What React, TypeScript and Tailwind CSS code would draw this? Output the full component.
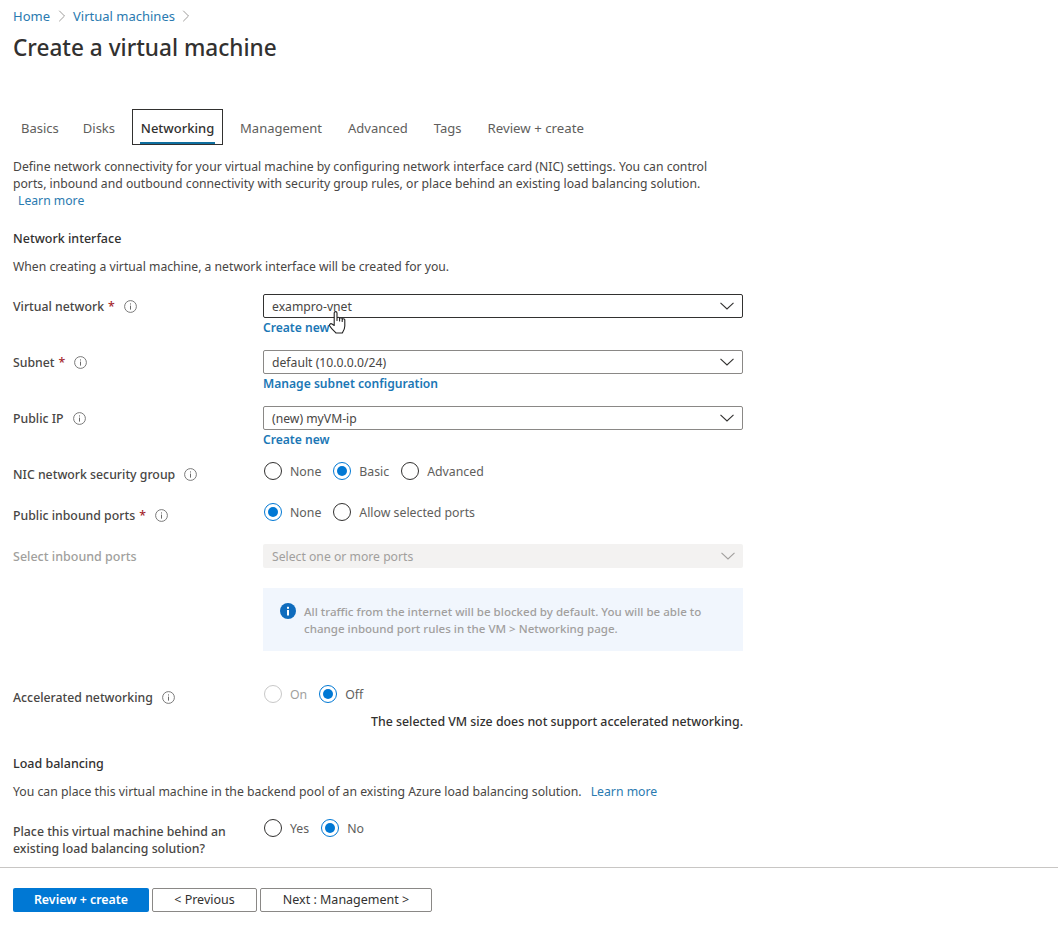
import React from 'react';
import { ChevronRight } from 'lucide-react';

const tabs = [
  { name: 'Basics', cls: 'pl-[8px] pr-[7px]' },
  { name: 'Disks', cls: 'px-[8px]' },
  { name: 'Networking', cls: '' },
  { name: 'Management', cls: 'pl-[8px] pr-[9px]' },
  { name: 'Advanced', cls: 'pl-[8px] pr-[9px]' },
  { name: 'Tags', cls: 'pl-[8px] pr-[9px]' },
  { name: 'Review + create', cls: 'px-[8px] text-[13.25px]' },
];

const InfoIcon = () => (
  <svg width="13" height="13" viewBox="0 0 13 13" className="shrink-0">
    <circle cx="6.5" cy="6.5" r="5.9" fill="none" stroke="#6b6b6b" strokeWidth="0.9" />
    <rect x="6" y="5.6" width="1" height="4" fill="#6b6b6b" />
    <rect x="6" y="3.4" width="1" height="1.1" fill="#6b6b6b" />
  </svg>
);

const Caret = ({ color }: { color: string }) => (
  <svg width="14" height="8" viewBox="0 0 14 8" fill="none" stroke={color} strokeWidth="1.1">
    <polyline points="0.5,0.8 7,7 13.5,0.8" />
  </svg>
);

// cursor over the first dropdown
const HandCursor = () => (
  <svg width="18" height="23" viewBox="0 0 18 23" className="absolute left-[66px] top-[17px]">
    <path
      d="M5.2 14 V2 a1.4 1.4 0 0 1 2.8 0 V9.5 V7.5 a1.3 1.3 0 0 1 2.6 0 V10 V8 a1.3 1.3 0 0 1 2.6 0 V10.5 V9 a1.3 1.3 0 0 1 2.6 0 V15 c0 3 -1.5 5 -2.5 7 H7 C5 20 2.5 18 0.8 15 C0 13.5 1.5 12 3 13 L5.2 14.5 Z"
      fill="white"
      stroke="#222"
      strokeWidth="1.1"
      strokeLinejoin="round"
    />
  </svg>
);

const Radio = ({ label, checked, disabled }: { label: string; checked?: boolean; disabled?: boolean }) => (
  <div className="flex items-center gap-[8px]">
    <span
      className={`flex h-[18px] w-[18px] items-center justify-center rounded-full border ${
        checked ? 'border-[#0078d4]' : disabled ? 'border-[#c8c8c8]' : 'border-[#323130]'
      }`}
    >
      {checked && <span className="h-[10px] w-[10px] rounded-full bg-[#0078d4]" />}
    </span>
    <span className={`text-[12.3px] ${disabled ? 'text-[#a19f9d]' : 'text-[#605e5c]'}`}>{label}</span>
  </div>
);

const Label = ({ text, required, disabled }: { text: string; required?: boolean; disabled?: boolean }) => (
  <div className={`flex w-[250px] shrink-0 items-center font-medium ${disabled ? 'text-[12.5px] text-[#a19f9d]' : 'text-[12.3px] text-[#484644]'}`}>
    <span>{text}</span>
    {required && <span className="ml-[4px] text-[#a4262c]">*</span>}
    {!disabled && (
      <span className="ml-[9px]">
        <InfoIcon />
      </span>
    )}
  </div>
);

const Select = ({ value, active, disabled }: { value: string; active?: boolean; disabled?: boolean }) => (
  <div
    className={`flex h-[24px] w-[480px] items-center justify-between rounded-[2px] pr-[8px] ${
      disabled
        ? 'bg-[#f3f2f1] pl-[9px] text-[#a19f9d]'
        : `border bg-white pl-[8px] text-[#484644] ${active ? 'border-[#323130]' : 'border-[#8a8886]'}`
    }`}
  >
    <span>{value}</span>
    <Caret color={disabled ? '#a19f9d' : '#323130'} />
  </div>
);

const SelectRow = ({ label, required, value, link, active }: { label: string; required?: boolean; value: string; link: string; active?: boolean }) => (
  <div className="flex h-[56px] items-start">
    <div className="flex h-[24px] items-center">
      <Label text={label} required={required} />
    </div>
    <div className="relative">
      <Select value={value} active={active} />
      <div className="mt-[1px] h-[18px] text-[12.1px] font-semibold leading-[18px] text-[#1b77b5]">{link}</div>
      {active && <HandCursor />}
    </div>
  </div>
);

export default function App() {
  return (
    <div className="relative h-[925px] w-[1058px] overflow-hidden bg-white font-['Noto_Sans',sans-serif] text-[12.2px] leading-[17px] text-[#484644]">
      <div className="px-[13px]">
        <nav className="flex h-[32px] items-center text-[13px] text-[#2a7ab0]">
          <span>Home</span>
          <ChevronRight size={20} strokeWidth={1} className="mx-[1.5px] text-[#8a8886]" />
          <span>Virtual machines</span>
          <ChevronRight size={20} strokeWidth={1} className="mx-[1.5px] text-[#8a8886]" />
        </nav>
        <h1 className="h-[32px] text-[22.6px] font-medium leading-[32px] text-[#323130]">Create a virtual machine</h1>

        <div className="mt-[45px] flex h-[36px] items-stretch gap-[9px] text-[13px]">
          {tabs.map((tab) =>
            tab.name === 'Networking' ? (
              <div key={tab.name} className="relative flex w-[91px] items-center justify-center border border-[#323130] pt-[2px] font-medium text-[#323130]">
                {tab.name}
                <span className="absolute bottom-[0px] left-[7px] right-[7px] h-[2px] bg-[#0f6f9f]" />
              </div>
            ) : (
              <div key={tab.name} className={`flex items-center pt-[2px] text-[#605e5c] ${tab.cls}`}>
                {tab.name}
              </div>
            ),
          )}
        </div>

        <p className="mt-[13px] w-[720px]">
          Define network connectivity for your virtual machine by configuring network interface card (NIC) settings. You can control ports, inbound and outbound connectivity with security group rules, or place behind an existing load balancing solution.
        </p>
        <div className="ml-[5px] text-[#2a7ab0]">Learn more</div>

        <h2 className="mt-[21px] text-[12.5px] font-medium text-[#323130]">Network interface</h2>
        <p className="mt-[11px]">When creating a virtual machine, a network interface will be created for you.</p>

        <div className="mt-[19px]">
          <SelectRow label="Virtual network" required value="exampro-vnet" link="Create new" active />
          <SelectRow label="Subnet" required value="default (10.0.0.0/24)" link="Manage subnet configuration" />
          <SelectRow label="Public IP" value="(new) myVM-ip" link="Create new" />
        </div>

        <div className="flex h-[41px] items-start">
          <div className="flex h-[18px] translate-y-[3px] items-center"><Label text="NIC network security group" /></div>
          <div className="ml-[1px] flex gap-[12px]">
            <Radio label="None" />
            <Radio label="Basic" checked />
            <Radio label="Advanced" />
          </div>
        </div>

        <div className="flex h-[41px] items-start">
          <div className="flex h-[18px] translate-y-[3px] items-center"><Label text="Public inbound ports" required /></div>
          <div className="ml-[1px] flex gap-[12px]">
            <Radio label="None" checked />
            <Radio label="Allow selected ports" />
          </div>
        </div>

        <div className="flex items-center">
          <Label text="Select inbound ports" disabled />
          <Select value="Select one or more ports" disabled />
        </div>

        <div className="ml-[250px] mt-[20px] flex h-[63px] w-[480px] gap-[8px] bg-[#f1f6fd] pl-[17px] pt-[15px] text-[11.55px] font-medium text-[#a19f9d]">
          <svg width="16" height="16" viewBox="0 0 16 16" className="shrink-0">
            <circle cx="8" cy="8" r="8" fill="#0f6cbd" />
            <rect x="7" y="7" width="2" height="5.5" fill="white" />
            <rect x="7" y="3.8" width="2" height="2" fill="white" />
          </svg>
          <p>
            All traffic from the internet will be blocked by default. You will be able to change inbound port rules in the VM &gt; Networking page.
          </p>
        </div>

        <div className="mt-[34px] flex items-start">
          <div className="flex h-[18px] translate-y-[3px] items-center"><Label text="Accelerated networking" /></div>
          <div className="ml-[1px] flex gap-[12px]">
            <Radio label="On" disabled />
            <Radio label="Off" checked />
          </div>
        </div>
        <div className="mt-[10px] w-[730px] text-right text-[12.35px] font-medium text-[#323130]">The selected VM size does not support accelerated networking.</div>

        <h2 className="mt-[25px] text-[12.5px] font-medium text-[#323130]">Load balancing</h2>
        <p className="mt-[11px] text-[12.25px]">
          You can place this virtual machine in the backend pool of an existing Azure load balancing solution.
          <span className="ml-[9px] text-[#2a7ab0]">Learn more</span>
        </p>

        <div className="mt-[19px] flex items-start">
          <div className="w-[250px] shrink-0 pt-[4px] text-[12.3px] font-medium">
            Place this virtual machine behind an
            <br />
            existing load balancing solution?
          </div>
          <div className="ml-[1px] flex gap-[12px]">
            <Radio label="Yes" />
            <Radio label="No" checked />
          </div>
        </div>
      </div>

      <div className="absolute bottom-0 left-0 right-0 h-[58px] border-t border-[#c8c6c4] bg-white px-[13px] pt-[20px]">
        <div className="flex gap-[3px] text-[12.5px]">
          <button className="h-[24px] w-[136px] rounded-[2px] bg-[#0078d4] pb-[2px] text-[12.4px] font-semibold text-white">Review + create</button>
          <button className="h-[24px] w-[105px] rounded-[2px] border border-[#8a8886] bg-white pb-[2px] text-[#323130]">&lt; Previous</button>
          <button className="h-[24px] w-[172px] rounded-[2px] border border-[#8a8886] bg-white pb-[2px] text-[#323130]">Next : Management &gt;</button>
        </div>
      </div>
    </div>
  );
}
